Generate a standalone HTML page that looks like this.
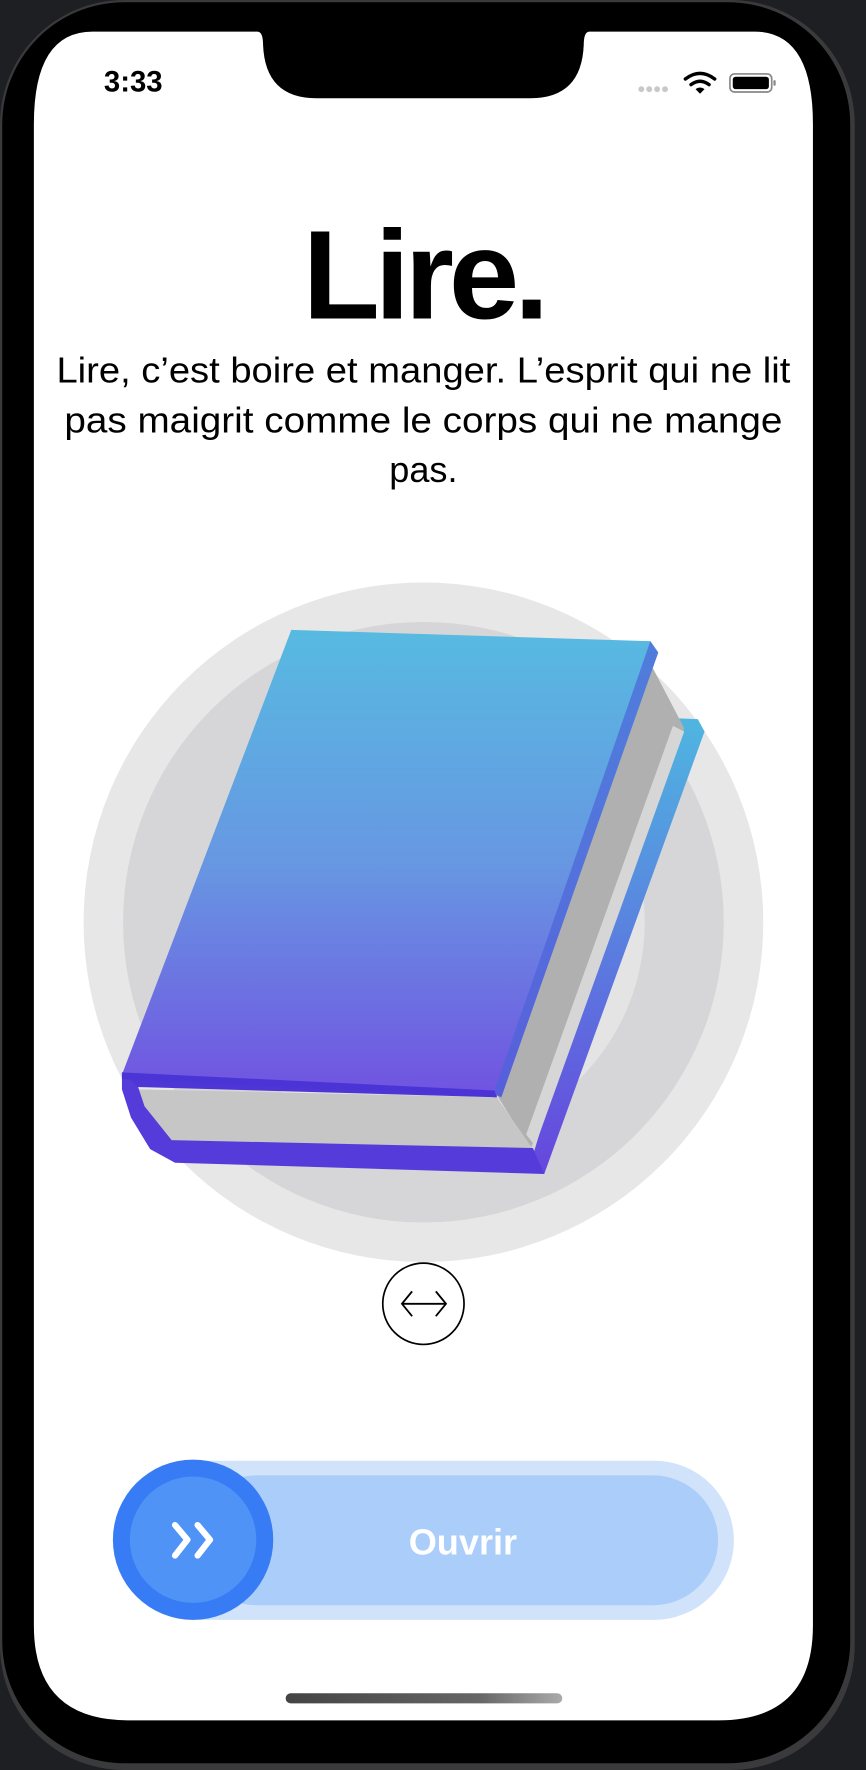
<!DOCTYPE html>
<html><head><meta charset="utf-8"><style>
html,body{margin:0;padding:0;background:#1e1f22;}
svg{display:block}
</style></head><body>
<svg width="866" height="1770" viewBox="0 0 767 1568" preserveAspectRatio="none" xmlns="http://www.w3.org/2000/svg">
<defs>
<linearGradient id="cov" x1="0" y1="0" x2="0" y2="1"><stop offset="0" stop-color="#57bae1"/><stop offset="0.5" stop-color="#6797e2"/><stop offset="1" stop-color="#7152e1"/></linearGradient>
<linearGradient id="back" x1="0" y1="0" x2="0" y2="1"><stop offset="0" stop-color="#4fb6e0"/><stop offset="1" stop-color="#6646de"/></linearGradient>
<linearGradient id="home" x1="0" y1="0" x2="1" y2="0"><stop offset="0" stop-color="#444"/><stop offset="0.7" stop-color="#666"/><stop offset="1" stop-color="#aaa"/></linearGradient>
</defs>
<rect width="767" height="1568" fill="#1e1f22"/>
<rect x="0" y="0" width="757" height="1568" rx="110" fill="#3a3a3c"/>
<rect x="2" y="2" width="751" height="1560" rx="108" fill="#000"/>
<path d="M82 28 H228 Q233 28 233 40 Q235 87 280 87 H470 Q515 87 517 40 Q517 28 522 28 H668 Q720 28 720 110 V1440 Q720 1524 636 1524 H114 Q30 1524 30 1440 V110 Q30 28 82 28 Z" fill="#fff"/>
<text x="92" y="81" font-family="Liberation Sans, sans-serif" font-weight="bold" font-size="26" fill="#000">3:33</text>
<g fill="#c8c8c8"><circle cx="568" cy="79" r="2.6"/><circle cx="575" cy="79" r="2.6"/><circle cx="582" cy="79" r="2.6"/><circle cx="589" cy="79" r="2.6"/></g>
<g fill="none" stroke="#000" stroke-width="3" stroke-linecap="round"><path d="M607 70 Q620 60 633 70"/><path d="M612 75 Q620 69 628 75"/></g>
<path d="M616 79 L620 83 L624 79 Q620 76 616 79Z" fill="#000"/>
<rect x="646.5" y="65.5" width="37" height="16" rx="4" fill="none" stroke="#888" stroke-width="1.5"/>
<rect x="649" y="68" width="32" height="11" rx="2.5" fill="#000"/>
<rect x="685" y="71" width="2" height="5" rx="1" fill="#888"/>
<text x="375" y="282" text-anchor="middle" font-family="Liberation Sans, sans-serif" font-weight="bold" font-size="112" letter-spacing="-4.5" fill="#000">Lire.</text>
<g font-family="Liberation Sans, sans-serif" font-size="32" fill="#000" text-anchor="middle">
<text x="375" y="339" textLength="650" lengthAdjust="spacingAndGlyphs">Lire, c’est boire et manger. L’esprit qui ne lit</text>
<text x="375" y="383" textLength="636" lengthAdjust="spacingAndGlyphs">pas maigrit comme le corps qui ne mange</text>
<text x="375" y="427">pas.</text>
</g>
<circle cx="375" cy="817" r="301" fill="#e7e7e7"/>
<circle cx="375" cy="817" r="266" fill="#d6d6d8"/>
<circle cx="375" cy="817" r="196" fill="#e4e4e5"/>
<path d="M590 636 L618 637 L624 648 L482 1040 L470 1030 Z" fill="url(#back)"/>
<path d="M572 580 L606 645 L470 1018 L440 970 Z" fill="#b0b0b0"/>
<path d="M596 643 L606 648 L474 1015 L466 1005 Z" fill="#d6d6d6"/>
<path d="M122 965 L440 972 L472 1018 L150 1010 L130 985 Z" fill="#c6c6c6"/>
<path d="M108 950 L122 962 L128 980 L152 1010 L472 1017 L482 1040 L155 1030 L133 1018 L116 990 L108 965 Z" fill="#553bda"/>
<path d="M108 950 L440 968 L440 972 L122 963 Z" fill="#4d35d6"/>
<path d="M258 558 L576 568 L583 578 L444 972 L440 970 L108 952 Z" fill="url(#cov)"/>
<path d="M576 568 L583 578 L444 972 L437 969 Z" fill="#4c64d8" opacity="0.7"/>
<path d="M108 950 L438 966 L440 972 L108 956 Z" fill="#4b34d6"/>
<circle cx="375" cy="1155" r="36" fill="#fff" stroke="#000" stroke-width="1.5"/>
<g fill="none" stroke="#000" stroke-width="1.6"><path d="M356 1155 H395"/><path d="M365 1144 L356 1155 L365 1166"/><path d="M386 1144 L395 1155 L386 1166"/></g>
<rect x="100" y="1294" width="550" height="141" rx="70.5" fill="#d0e3fb"/>
<rect x="170" y="1307" width="466" height="115" rx="57.5" fill="#abcdf9"/>
<circle cx="171" cy="1364" r="71" fill="#377bf5"/>
<circle cx="171" cy="1364" r="56" fill="#4e93f5"/>
<g fill="none" stroke="#fff" stroke-width="5.5" stroke-linecap="round" stroke-linejoin="round"><path d="M155 1351 L166 1364 L155 1378"/><path d="M175 1351 L186 1364 L175 1378"/></g>
<text x="410" y="1377" text-anchor="middle" font-family="Liberation Sans, sans-serif" font-weight="bold" font-size="32" fill="#fff">Ouvrir</text>
<rect x="253" y="1500" width="245" height="9" rx="4.5" fill="url(#home)"/>
</svg>
</body></html>
